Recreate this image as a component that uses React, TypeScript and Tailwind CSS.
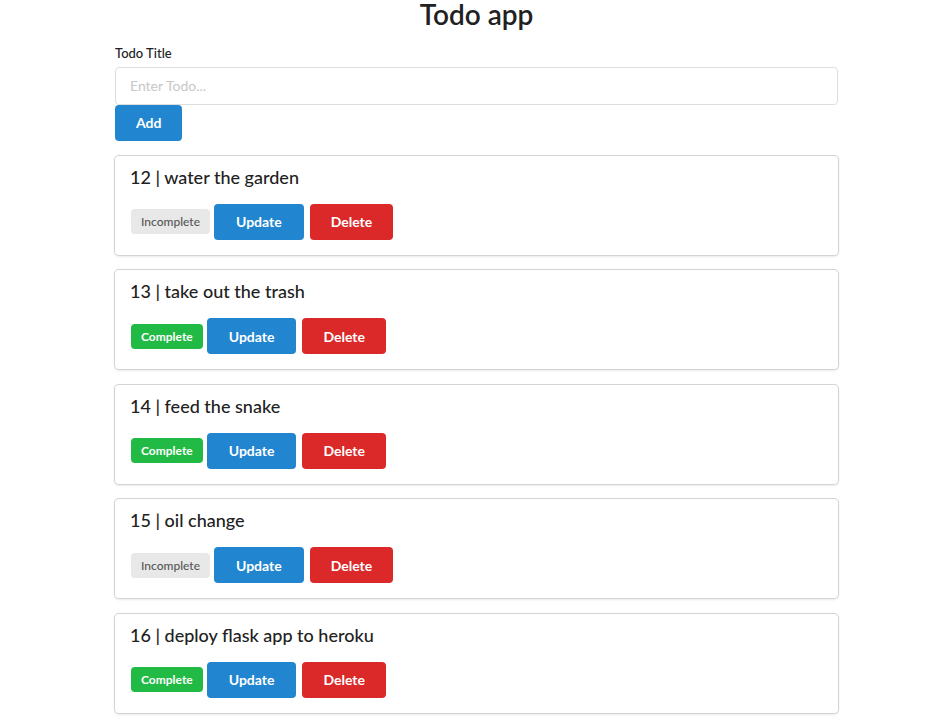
const todos = [
  { id: 12, title: 'water the garden', complete: false },
  { id: 13, title: 'take out the trash', complete: true },
  { id: 14, title: 'feed the snake', complete: true },
  { id: 15, title: 'oil change', complete: false },
  { id: 16, title: 'deploy flask app to heroku', complete: true },
]

export default function App() {
  return (
    <div className="min-h-screen bg-white font-['Lato',sans-serif] text-[#212121]">
      <div className="ml-[115px] w-[723px]">
        <h1 className="text-center text-[28px] leading-[28px] font-semibold">Todo app</h1>

        <label className="mt-[16px] mb-[4px] block text-[13px] leading-[18.5px] font-medium">Todo Title</label>
        <input
          type="text"
          placeholder="Enter Todo..."
          className="block h-[38px] w-full rounded-[4px] border border-[#dededf] px-[14px] text-[14px] outline-none placeholder:text-[#c7c7c7]"
        />
        <button className="h-[36px] rounded-[4px] bg-[#2185d0] px-[21px] text-[14px] font-bold text-white">
          Add
        </button>

        <div className="mt-[15px] flex flex-col gap-[15.5px]">
          {todos.map((t) => (
            <div
              key={t.id}
              className="rounded-[4px] bg-white px-[15px] pt-[11px] pb-[15px] shadow-[0_1px_3px_0_#d4d4d5,0_0_0_1px_#d4d4d5]"
            >
              <div className="text-[18px] leading-[20px] font-medium">
                {t.id} | {t.title}
              </div>
              <div className="mt-[17px] flex items-center">
                {t.complete ? (
                  <span className="ml-[1px] rounded-[4px] bg-[#21ba45] px-[10px] text-[12px] leading-[25px] font-bold text-white">
                    Complete
                  </span>
                ) : (
                  <span className="ml-[1px] rounded-[4px] bg-[#e8e8e8] px-[10px] text-[12px] leading-[25px] font-medium text-[#575757]">
                    Incomplete
                  </span>
                )}
                <button className="ml-[4px] h-[36px] rounded-[4px] bg-[#2185d0] px-[22px] text-[14px] font-bold text-white">
                  Update
                </button>
                <button className="ml-[6px] h-[36px] rounded-[4px] bg-[#db2828] px-[21px] text-[14px] font-bold text-white">
                  Delete
                </button>
              </div>
            </div>
          ))}
        </div>
      </div>
    </div>
  )
}
